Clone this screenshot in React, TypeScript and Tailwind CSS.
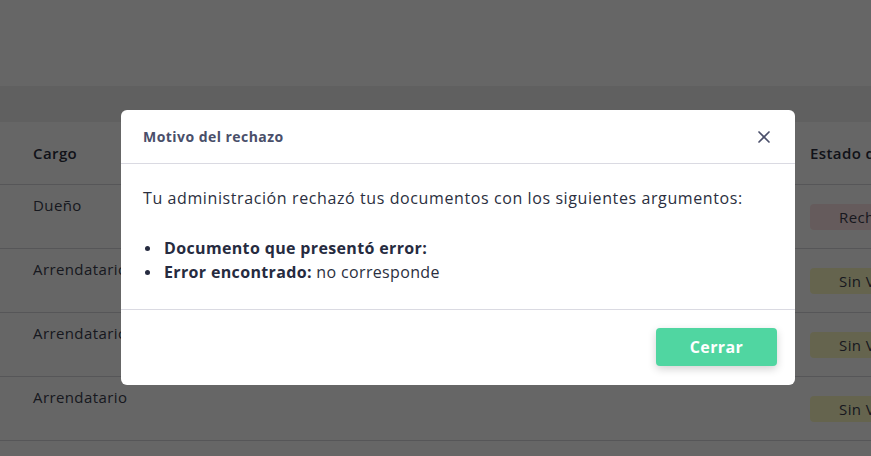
import { X } from 'lucide-react'

const rows = [
  { cargo: 'Dueño', estado: 'Rechazado', tone: 'bg-[#fde4e6]' },
  { cargo: 'Arrendatario', estado: 'Sin Validar', tone: 'bg-[#fdfac4]' },
  { cargo: 'Arrendatario', estado: 'Sin Validar', tone: 'bg-[#fdfac4]' },
  { cargo: 'Arrendatario', estado: 'Sin Validar', tone: 'bg-[#fdfac4]' },
  { cargo: 'Dueño', estado: 'Sin Validar', tone: 'bg-[#fdfac4]' },
]

function ResidentsTable() {
  return (
    <div className="w-full">
      <div className="flex h-[63px] items-center border-b border-[#d6d6dc] text-[15px] font-semibold tracking-[0.4px] text-[#2c2f40]">
        <div className="w-[810px] shrink-0 pl-[33px]">Cargo</div>
        <div className="whitespace-nowrap">Estado del documento</div>
      </div>
      {rows.map((row, i) => (
        <div key={i} className="flex h-[64px] border-b border-[#d6d6dc] text-[15px] tracking-[0.4px] text-[#3b3e4e]">
          <div className="w-[810px] shrink-0 pl-[33px] pt-[9px]">{row.cargo}</div>
          <div className="flex items-center">
            <span className={`whitespace-nowrap rounded-[4px] px-[29px] py-[2px] leading-[22px] ${row.tone}`}>
              {row.estado}
            </span>
          </div>
        </div>
      ))}
    </div>
  )
}

export default function App() {
  return (
    <div className="relative h-[456px] w-full overflow-hidden bg-white font-['Open_Sans',sans-serif]">
      <div className="h-[86px] bg-white" />
      <div className="h-[36px] bg-[#efefef]" />
      <ResidentsTable />

      {/* overlay + modal */}
      <div className="absolute inset-0 bg-black/60">
        <div className="ml-[121px] mt-[110px] w-[674px] rounded-[6px] bg-white">
          <div className="flex h-[54px] items-center justify-between border-b border-[#dadae2] pl-[22px] pr-[21px]">
            <h3 className="text-[14px] font-bold tracking-[0.45px] text-[#4a4f6a]">Motivo del rechazo</h3>
            <button className="flex h-5 w-5 items-center justify-center text-[#4a4f6a]">
              <X className="h-[22px] w-[22px]" strokeWidth={2} />
            </button>
          </div>
          <div className="px-[22px] pb-[25px] pt-[22px] text-[16px] leading-[24px] text-[#2b2f40]">
            <p className="tracking-[0.6px]">Tu administración rechazó tus documentos con los siguientes argumentos:</p>
            <ul className="mt-[26px] tracking-[0.35px]">
              <li className="flex items-center">
                <span className="ml-[2px] mr-[14px] h-[5px] w-[5px] shrink-0 rounded-full bg-[#262b40]" />
                <span className="font-bold text-[#262b40]">Documento que presentó error:</span>
              </li>
              <li className="flex items-center">
                <span className="ml-[2px] mr-[14px] h-[5px] w-[5px] shrink-0 rounded-full bg-[#262b40]" />
                <span>
                  <span className="font-bold text-[#262b40]">Error encontrado:</span> no corresponde
                </span>
              </li>
            </ul>
          </div>
          <div className="flex justify-end border-t border-[#dadae2] px-[18px] pb-[19px] pt-[18px]">
            <button className="h-[38px] w-[121px] rounded-[4px] bg-[#50d6a1] text-[16px] font-bold tracking-[0.4px] text-white shadow-[0_3px_8px_rgba(0,0,0,0.18)]">
              Cerrar
            </button>
          </div>
        </div>
      </div>
    </div>
  )
}
